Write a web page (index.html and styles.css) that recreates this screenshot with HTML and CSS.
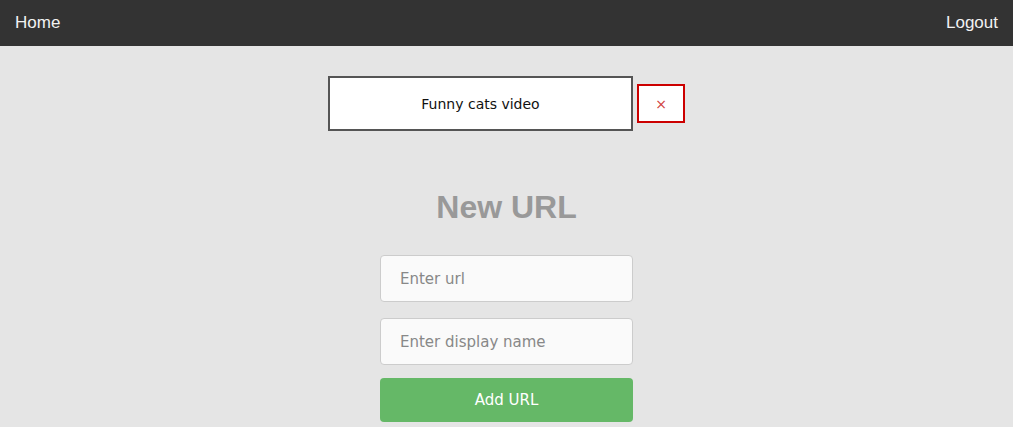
FILE: index.html
```html
<!DOCTYPE html>
<html>
<head>
<meta charset="utf-8">
<link rel="stylesheet" href="styles.css">
</head>
<body>
<nav class="navbar">
  <a class="nav-link" href="#">Home</a>
  <a class="nav-link" href="#">Logout</a>
</nav>
<main class="content">
  <div class="url-row">
    <div class="url-item">Funny cats video</div>
    <button class="remove-btn">×</button>
  </div>
  <h1 class="title">New URL</h1>
  <form class="url-form">
    <input class="field" type="text" placeholder="Enter url">
    <input class="field" type="text" placeholder="Enter display name">
    <button class="add-btn" type="button">Add URL</button>
  </form>
</main>
</body>
</html>
```
FILE: styles.css
```css
html, body {
  margin: 0;
  padding: 0;
  background: #e5e5e5;
  height: 100%;
}
body {
  font-family: "DejaVu Sans", sans-serif;
  overflow: hidden;
}
.navbar {
  height: 46px;
  background: #333333;
  display: flex;
  align-items: center;
  justify-content: space-between;
  padding: 0 15px;
  box-sizing: border-box;
}
.nav-link {
  color: #f2f2f2;
  text-decoration: none;
  font-family: "Liberation Sans", Arial, sans-serif;
  font-size: 17px;
  margin-top: -1px;
}
.content {
  display: flex;
  flex-direction: column;
  align-items: center;
}
.url-row {
  margin-top: 30px;
  display: flex;
  align-items: center;
  gap: 4px;
}
.url-item {
  width: 301px;
  height: 51px;
  border: 2px solid #555555;
  background: #ffffff;
  display: flex;
  align-items: center;
  justify-content: center;
  font-size: 14px;
  color: #111;
}
.remove-btn {
  width: 48px;
  height: 39px;
  border: 2px solid #cc0000;
  background: #ffffff;
  color: #d04040;
  font-size: 14px;
  font-family: "DejaVu Sans", sans-serif;
  padding: 0;
}
.title {
  margin: 56px 0 0;
  font-family: "Liberation Sans", Arial, sans-serif;
  font-size: 32px;
  font-weight: bold;
  color: #999999;
  line-height: 40px;
}
.url-form {
  margin-top: 28px;
  display: flex;
  flex-direction: column;
  width: 253px;
}
.field {
  box-sizing: border-box;
  height: 47px;
  border: 1px solid #cccccc;
  border-radius: 4px;
  background: #fafafa;
  padding: 0 19px;
  font-family: "DejaVu Sans", sans-serif;
  font-size: 15px;
  margin-bottom: 16px;
}
.field::placeholder {
  color: #888888;
}
.field:nth-of-type(2) {
  margin-bottom: 13px;
}
.add-btn {
  height: 44px;
  border: none;
  border-radius: 4px;
  background: #65b867;
  color: #ffffff;
  font-family: "DejaVu Sans", sans-serif;
  font-size: 15px;
}
```
